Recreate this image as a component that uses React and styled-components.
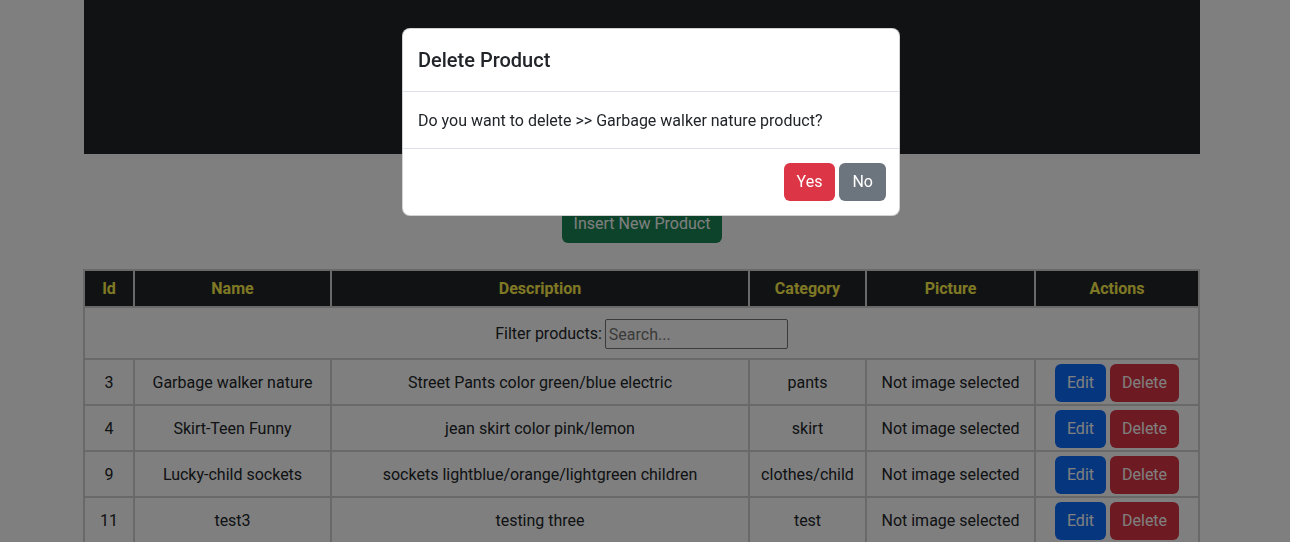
import React from 'react'
import styled, { createGlobalStyle } from 'styled-components'

const GlobalStyle = createGlobalStyle`
  body {
    margin: 0;
    padding-right: 6px;
    background: #fff;
    color: #212529;
    font-family: Roboto, "Liberation Sans", sans-serif;
    font-size: 16px;
    line-height: 1.5;
  }
  * { box-sizing: border-box; }
`

const Container = styled.div`
  max-width: 1140px;
  margin: 0 auto;
  padding: 0 12px;
`

const Banner = styled.div`
  height: 154px;
  background: #212529;
`

const Toolbar = styled.div`
  display: flex;
  justify-content: center;
  padding: 51px 0 26px;
`

const Button = styled.button`
  font-family: inherit;
  font-size: 16px;
  line-height: 24px;
  padding: ${props => (props.compact ? '6px 11px' : '6px 12px')};
  border: 1px solid transparent;
  border-radius: 6px;
  color: #fff;
  cursor: pointer;
  background: ${props => ({
    success: '#198754',
    primary: '#0d6efd',
    danger: '#dc3545',
    secondary: '#6c757d',
  }[props.variant])};
`

const Table = styled.table`
  width: calc(100% - 1px);
  margin-left: -1px;
  border-collapse: collapse;
  border: 2px solid #d2d2d2;
  table-layout: fixed;
`

const HeadCell = styled.th`
  background: #212529;
  color: #fff04a;
  font-weight: 700;
  text-align: center;
  padding: 6px 8px;
  line-height: 23px;
  border: 2px solid #d2d2d2;
`

const Cell = styled.td`
  text-align: center;
  vertical-align: middle;
  padding: ${props => (props.filter ? '11px 8px 9px' : '4px 8px 2px')};
  border: 2px solid #d2d2d2;
  white-space: nowrap;
`

const FilterLabel = styled.label`
  display: inline-flex;
  align-items: center;
  gap: 3px;
`

const SearchInput = styled.input`
  width: 183px;
  height: 30px;
  font-family: inherit;
  font-size: 16px;
  padding: 1px 3px;
  border: 1px solid #767676;
  border-radius: 2px;
  &::placeholder { color: #757575; }
`

const ActionGroup = styled.div`
  display: flex;
  justify-content: center;
  gap: 4px;
`

const Backdrop = styled.div`
  position: fixed;
  inset: 0;
  background: rgba(0, 0, 0, 0.5);
  display: flex;
  justify-content: center;
  align-items: flex-start;
  padding-left: 12px;
`

const Dialog = styled.div`
  width: 498px;
  margin-top: 28px;
  background: #fff;
  border: 1px solid rgba(0, 0, 0, 0.175);
  border-radius: 8px;
`

const DialogHeader = styled.div`
  padding: 16px 15px;
  border-bottom: 1px solid #dee2e6;
`

const DialogTitle = styled.h5`
  margin: 0;
  font-size: 20px;
  font-weight: 500;
  line-height: 30px;
`

const DialogBody = styled.div`
  padding: 17px 15px 15px;
`

const DialogFooter = styled.div`
  display: flex;
  justify-content: flex-end;
  gap: 4px;
  padding: 14px 13px;
  border-top: 1px solid #dee2e6;
`

const products = [
  { id: 3, name: 'Garbage walker nature', description: 'Street Pants color green/blue electric', category: 'pants' },
  { id: 4, name: 'Skirt-Teen Funny', description: 'jean skirt color pink/lemon', category: 'skirt' },
  { id: 9, name: 'Lucky-child sockets', description: 'sockets lightblue/orange/lightgreen children', category: 'clothes/child' },
  { id: 11, name: 'test3', description: 'testing three', category: 'test' },
]

const App = () => {
  return (
    <>
      <GlobalStyle />
      <Container>
        <Banner />
        <Toolbar>
          <Button compact variant="success">Insert New Product</Button>
        </Toolbar>
        <Table>
          <colgroup>
            <col style={{ width: 50 }} />
            <col style={{ width: 197 }} />
            <col style={{ width: 418 }} />
            <col style={{ width: 117 }} />
            <col style={{ width: 169 }} />
            <col style={{ width: 164 }} />
          </colgroup>
          <thead>
            <tr>
              <HeadCell>Id</HeadCell>
              <HeadCell>Name</HeadCell>
              <HeadCell>Description</HeadCell>
              <HeadCell>Category</HeadCell>
              <HeadCell>Picture</HeadCell>
              <HeadCell>Actions</HeadCell>
            </tr>
          </thead>
          <tbody>
            <tr>
              <Cell filter colSpan={6}>
                <FilterLabel>
                  Filter products:
                  <SearchInput placeholder="Search..." />
                </FilterLabel>
              </Cell>
            </tr>
            {products.map(p => (
              <tr key={p.id}>
                <Cell>{p.id}</Cell>
                <Cell>{p.name}</Cell>
                <Cell>{p.description}</Cell>
                <Cell>{p.category}</Cell>
                <Cell>Not image selected</Cell>
                <Cell>
                  <ActionGroup>
                    <Button compact variant="primary">Edit</Button>
                    <Button compact variant="danger">Delete</Button>
                  </ActionGroup>
                </Cell>
              </tr>
            ))}
          </tbody>
        </Table>
      </Container>
      <Backdrop>
        <Dialog>
          <DialogHeader>
            <DialogTitle>Delete Product</DialogTitle>
          </DialogHeader>
          <DialogBody>Do you want to delete &gt;&gt; Garbage walker nature product?</DialogBody>
          <DialogFooter>
            <Button variant="danger">Yes</Button>
            <Button variant="secondary">No</Button>
          </DialogFooter>
        </Dialog>
      </Backdrop>
    </>
  )
}

export default App
